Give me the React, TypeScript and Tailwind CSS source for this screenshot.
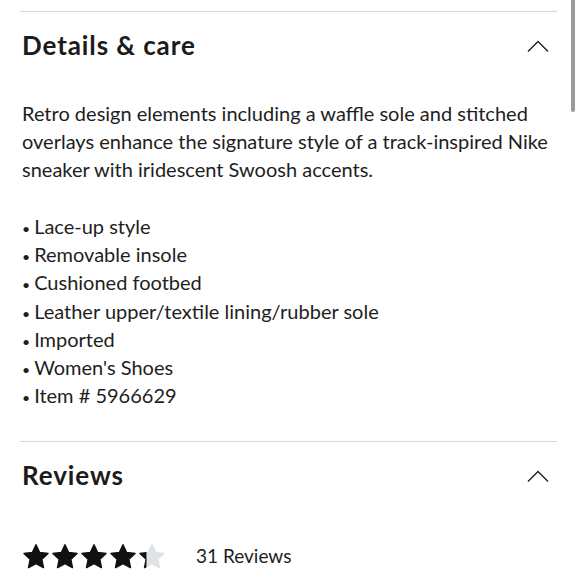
import React from "react";

const bullets = [
  "Lace-up style",
  "Removable insole",
  "Cushioned footbed",
  "Leather upper/textile lining/rubber sole",
  "Imported",
  "Women's Shoes",
  "Item # 5966629",
];

function ChevronUp() {
  return (
    <svg width="22" height="12" viewBox="0 0 22 12" fill="none">
      <path d="M1 11.5 L11 1.5 L21 11.5" stroke="#1f1f1f" strokeWidth="1.4" />
    </svg>
  );
}

const STAR = "M12 1.5l3.1 6.6 7.2.9-5.3 5 1.4 7.1L12 17.6l-6.4 3.5 1.4-7.1-5.3-5 7.2-.9z";

function Star({ fill }: { fill: number }) {
  const id = `clip-${Math.round(fill * 100)}`;
  return (
    <svg width="28" height="28" viewBox="0 0 24 24">
      <defs>
        <clipPath id={id}>
          <rect x="0" y="0" width={24 * fill} height="24" />
        </clipPath>
      </defs>
      <path d={STAR} fill="#dde3e6" stroke="#dde3e6" strokeWidth="1.2" strokeLinejoin="round" />
      <path d={STAR} fill="#111" stroke="#111" strokeWidth="1.2" strokeLinejoin="round" clipPath={`url(#${id})`} />
    </svg>
  );
}

function SectionHeader({ title }: { title: string }) {
  return (
    <div className="-ml-[2px] flex h-[68px] items-center justify-between border-t border-[#d3d8d8] pl-[2px] pr-[8px]">
      <h2 className="text-[26px] font-bold tracking-[0.9px] text-[#1b1b1b]">{title}</h2>
      <ChevronUp />
    </div>
  );
}

export default function App() {
  const rating = 4.3;
  return (
    <div
      className="relative h-[580px] w-[580px] overflow-hidden bg-white text-[#1e1e1e]"
      style={{ fontFamily: "Lato, 'Noto Sans', sans-serif" }}
    >
      <div className="pl-[22px] pr-[23px] pt-[11px]">
        <SectionHeader title="Details & care" />

        <p className="mt-[20px] text-[20px] leading-[28px]">
          Retro design elements including a waffle sole and stitched overlays enhance the signature style of a
          track-inspired Nike sneaker with iridescent Swoosh accents.
        </p>

        <ul className="mt-[29px] text-[20px] leading-[28.2px]">
          {bullets.map((b) => (
            <li key={b}>
              <span className="mr-[4px] text-[14px] leading-none">•</span>
              {b}
            </li>
          ))}
        </ul>

        <div className="mt-[32px]">
          <SectionHeader title="Reviews" />
        </div>

        <div className="mt-[33px] flex items-center">
          <div className="flex gap-[1px]">
            {[0, 1, 2, 3, 4].map((i) => (
              <Star key={i} fill={Math.max(0, Math.min(1, rating - i))} />
            ))}
          </div>
          <span className="ml-[30px] text-[19px]">31 Reviews</span>
        </div>
      </div>

      {/* scrollbar thumb */}
      <div className="absolute right-[5px] top-0 h-[112px] w-[4px] rounded-b-full bg-[#9a9a9a]" />
    </div>
  );
}
